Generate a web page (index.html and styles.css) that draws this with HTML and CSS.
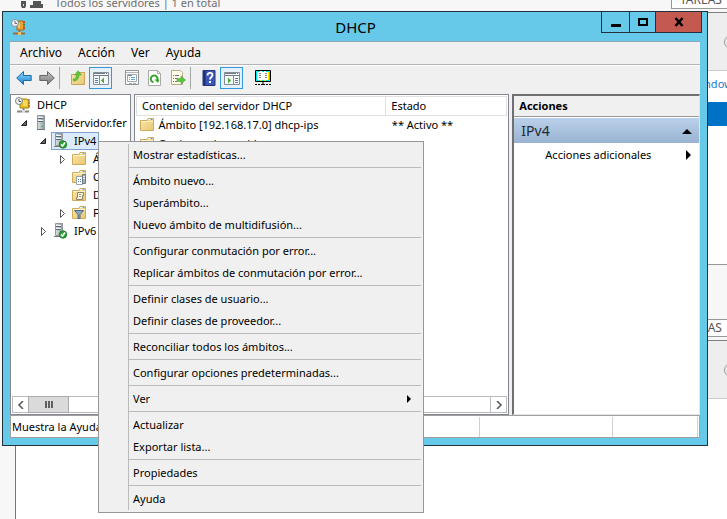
FILE: index.html
```html
<!DOCTYPE html>
<html lang="es">
<head>
<meta charset="utf-8">
<title>DHCP</title>
<link rel="stylesheet" href="styles.css">
</head>
<body>
<svg class="defs" aria-hidden="true">
  <defs>
    <linearGradient id="gold" x1="0" y1="0" x2="1" y2="1"><stop offset="0" stop-color="#fbe7a8"/><stop offset="1" stop-color="#e8c673"/></linearGradient>
    <linearGradient id="steel" x1="0" x2="1"><stop offset="0" stop-color="#dfe5e8"/><stop offset="1" stop-color="#8b979e"/></linearGradient>
    <linearGradient id="sky" x1="0" y1="0" x2="0" y2="1"><stop offset="0" stop-color="#8fd8fb"/><stop offset="1" stop-color="#1583cf"/></linearGradient>
    <linearGradient id="ash" x1="0" y1="0" x2="0" y2="1"><stop offset="0" stop-color="#c4c4c4"/><stop offset="1" stop-color="#777"/></linearGradient>
    <symbol id="folder" viewBox="0 0 16 16"><path d="M1.500 3.500h6.500l1-2h5.500v12h-13z" fill="url(#gold)" stroke="#cfab5e"/><path d="M9.500 2.500h4.500" stroke="#fff"/><path d="M11.500 2.500h2" stroke="#5b9bd5"/><path d="M2 4.500h12" stroke="#fff3c9"/></symbol>
    <symbol id="server" viewBox="0 0 16 16"><path d="M4.500.5h7v14h-7z" fill="url(#steel)" stroke="#8d989f"/><path d="M5 3.500h5M5 6.500h5" stroke="#5c6870"/><path d="M5 2.500h5M5 5.500h5" stroke="#f2f5f6"/><path d="M8 11.500h2" stroke="#55b53c"/><path d="M4 14.500h8" stroke="#6c777e"/></symbol>
    <symbol id="server-ok" viewBox="0 0 16 16"><path d="M3.500.5h7v12h-7z" fill="url(#steel)" stroke="#8d989f"/><path d="M4 3.500h5M4 6.500h5" stroke="#5c6870"/><path d="M4 2.500h5M4 5.500h5" stroke="#f2f5f6"/><path d="M2 13.500h6" stroke="#777"/><circle cx="11" cy="11.500" r="3.700" fill="#2fa336" stroke="#1e7e27"/><path d="M9 11.500l1.500 1.500 2.500-3.500" fill="none" stroke="#fff" stroke-width="1.500"/></symbol>
    <symbol id="dhcp" viewBox="0 0 16 16"><path d="M7 2h5l2 2v7H5V5z" fill="#e7c51e" stroke="#a78312"/><path d="M8 4h1v5M11 3v6" stroke="#fff49a" fill="none"/><path d="M13 3h2M13 6h2M13 9h2" stroke="#b2402b"/><path d="M8.500 11v2M2 14.500h12" stroke="#888" stroke-width="2"/><path d="M7 14.500h3" stroke="#ddd" stroke-width="3"/><circle cx="4" cy="4" r="3.500" fill="#f4f4f4" stroke="#808080"/><path d="M4 2v2.500h2" fill="none" stroke="#555"/></symbol>
    <symbol id="dhcp-title" viewBox="0 0 16 16"><path d="M7 2h5l1 2v7H6V5z" fill="#e9a233" stroke="#a86a19"/><path d="M8 4v5" stroke="#ffe09a"/><path d="M12 3h2M12 9h2" stroke="#b8572c" stroke-width="2"/><path d="M12 6h2" stroke="#3f8f46" stroke-width="2"/><path d="M8.500 11v2M2 14.500h12" stroke="#9b7040" stroke-width="2"/><path d="M7 14.500h3" stroke="#f4c160" stroke-width="3"/><circle cx="4" cy="4" r="3.500" fill="#eef2f4" stroke="#84929b"/><path d="M4 2v2.500h2" fill="none" stroke="#666"/></symbol>
    <symbol id="folder-server" viewBox="0 0 16 16"><use href="#folder"/><path d="M5.500 7.500h6v8h-6z" fill="#fff" stroke="#9aa3a8"/><path d="M7 10.500h1m1 0h1m-3 2h1m1 0h1" stroke="#4a74a8"/><path d="M11.500 5.500h3v9h-3z" fill="#a4b0b6" stroke="#6c7980"/><path d="M12 7.500h2m-2 2h2" stroke="#eee"/></symbol>
    <symbol id="folder-scroll" viewBox="0 0 16 16"><use href="#folder"/><path d="M6.500 5.500h6v3h-1v4h-6v-2h1z" fill="#f5f2e6" stroke="#95835a"/><path d="M8 7.500h2m-2 2h2" stroke="#a09880"/></symbol>
    <symbol id="folder-filter" viewBox="0 0 16 16"><use href="#folder"/><path d="M3.500 5.500h9l-3.500 4v4h-2v-4z" fill="#8fa9c2" stroke="#4c6982"/></symbol>
    <symbol id="open" viewBox="0 0 16 16"><path d="M10.500 5.500v5h-5z" fill="#666" stroke="#222"/></symbol>
    <symbol id="closed" viewBox="0 0 16 16"><path d="M6.500 4.500v8l4-4z" fill="#fff" stroke="#555"/></symbol>
    <symbol id="back" viewBox="0 0 16 16"><path d="M.7 8l6.800-6.500v4h7.700v5H7.500v4z" fill="url(#sky)" stroke="#1b6ca8"/></symbol>
    <symbol id="forward" viewBox="0 0 16 16"><path d="M15.300 8L8.500 1.500v4H.8v5h7.700v4z" fill="url(#ash)" stroke="#666"/></symbol>
    <symbol id="up" viewBox="0 0 16 16"><path d="M1.500 4.500h6l1-2h6v12h-13z" fill="url(#gold)" stroke="#c9a557"/><path d="M3 9c2.500 0 3.500-1.500 3.500-4H4.500L8 .7 11.500 5H9c0 4-2.500 6-5.500 6z" fill="#63c43c" stroke="#3c9f22" stroke-width=".5"/></symbol>
    <symbol id="pane-left" viewBox="0 0 16 16"><path d="M.5 2.500h15v12H.5z" fill="#f7f8f9" stroke="#858d96"/><path d="M1 3.500h11m1 0h1M1 5.500h14" stroke="#737d89"/><path d="M6.500 6v9" stroke="#858d96"/><path d="M2 8.500h3M2 10.500h3M2 12.500h3" stroke="#557fae"/><path d="M11 7.500v6l-3-3z" fill="#3fae35"/></symbol>
    <symbol id="pane-right" viewBox="0 0 16 16"><path d="M.5 2.500h15v12H.5z" fill="#f7f8f9" stroke="#858d96"/><path d="M1 3.500h11m1 0h1M1 5.500h14" stroke="#737d89"/><path d="M9.500 6v9" stroke="#858d96"/><path d="M11 8.500h3m-3 2h3m-3 2h3" stroke="#557fae"/><path d="M4 7.500v6l3-3z" fill="#3fae35"/></symbol>
    <symbol id="props" viewBox="0 0 16 16"><path d="M1.500.5h13v14h-13z" fill="#fafafa" stroke="#929292"/><path d="M2 2.500h12" stroke="#b4b4b4"/><path d="M3.500 4.500h9v7h-9z" fill="#fff" stroke="#9aa9b5"/><path d="M4 5.500h4" stroke="#74828e"/><path d="M5 7.500h1m1 0h4m-6 2h1m1 0h4" stroke="#66a5d5"/><path d="M5 13.500h3m1 0h3" stroke="#aaa"/></symbol>
    <symbol id="refresh" viewBox="0 0 16 16"><path d="M1.500.5h9l3 3v12h-12z" fill="#fff" stroke="#aaa"/><path d="M10.500.5v3h3" fill="none" stroke="#aaa"/><path d="M6.500 12.200a3.400 3.400 0 1 1 3.800-2" fill="none" stroke="#34a52b" stroke-width="2"/><path d="M7.500 9.500h5L11 13z" fill="#34a52b"/></symbol>
    <symbol id="export" viewBox="0 0 16 16"><path d="M1.500.5h9l2 2v12h-11z" fill="#fffbe8" stroke="#b5ab85"/><path d="M3 5.500h1m1 0h4M3 8.500h1m1 0h2m-4 3h1m1 0h2" stroke="#777"/><path d="M7 8.500h4V6l4.500 4-4.500 4v-2.500H7z" fill="#5ac63b" stroke="#36961f" stroke-width=".5"/></symbol>
    <symbol id="help" viewBox="0 0 16 16"><path d="M2 .5h12v15H2z" fill="#3c57b7" stroke="#26357c"/><path d="M3.500 1v14" stroke="#1d2c70" stroke-width="2"/><path d="M6.500 5.500c0-3.500 5-3.500 5-.5 0 2-2.500 2-2.500 4.500" fill="none" stroke="#fff" stroke-width="1.800"/><path d="M8 11h2v2H8z" fill="#fff"/></symbol>
    <symbol id="monitor" viewBox="0 0 16 16"><path d="M.5.5h15v11H.5z" fill="#fff" stroke="#000"/><path d="M1.500 1.500h13v9h-13z" fill="none" stroke="#00e5ee"/><path d="M5 1.500h2M9 1.500h2" stroke="#fff"/><path d="M2.500 2v8M13.500 2v8M5 10.500h2M9 10.500h2" stroke="#f5ee00"/><path d="M4 3.500h2M4 5.500h2M4 7.500h2M10 3.500h2M10 5.500h2M10 7.500h2" stroke="#888"/><path d="M8 12v3M6 14.500h4M0 14.500h2m1 0h2m6 0h2m1 0h2" stroke="#000"/></symbol>
  </defs>
</svg>

<div class="desktop">
  <header class="strip">
    <svg class="rack" viewBox="0 0 26 8" aria-hidden="true"><path d="M1 0h5v5l-1 2H2L1 5zM13 0h8v3h2v4H10V4h3z" fill="#555"/><path d="M3 3h1v2H3z" fill="#ddd"/></svg>
    <span class="strip-title">Todos los servidores | 1 en total</span>
    <button class="tasks" type="button">TAREAS</button>
  </header>
  <aside class="side"></aside>
  <main class="main">
    <div class="filter"><span class="circle"></span></div>
    <section class="grid-area"><a class="os" href="#">Windows Server</a><div class="picked"></div></section>
    <div class="heading"><button class="tasks" type="button">TAREAS</button></div>
    <div class="filter"><span class="circle"></span></div>
  </main>
</div>

<section class="window" aria-label="DHCP">
  <header class="titlebar">
    <svg class="icon" aria-hidden="true"><use href="#dhcp-title"/></svg>
    <h1>DHCP</h1>
    <div class="caption">
      <button type="button" aria-label="Minimizar"><svg viewBox="0 0 12 10"><path d="M1 8.500h10" stroke="#000" stroke-width="3"/></svg></button>
      <button class="max" type="button" aria-label="Maximizar"><svg viewBox="0 0 12 10"><path d="M2 2h8v6H2z" fill="none" stroke="#000" stroke-width="2"/></svg></button>
      <button class="close" type="button" aria-label="Cerrar"><svg viewBox="0 0 12 10"><path d="M2.500 1l7 8M9.500 1l-7 8" stroke="#000" stroke-width="2.500"/></svg></button>
    </div>
  </header>
  <div class="client">
    <nav class="menubar">
      <button type="button">Archivo</button><button type="button">Acción</button><button type="button">Ver</button><button type="button">Ayuda</button>
    </nav>
    <div class="toolbar">
      <button type="button" aria-label="Atrás"><svg class="icon"><use href="#back"/></svg></button>
      <button type="button" aria-label="Adelante"><svg class="icon"><use href="#forward"/></svg></button>
      <i class="rule"></i>
      <button type="button" aria-label="Subir un nivel"><svg class="icon"><use href="#up"/></svg></button>
      <button class="on" type="button" aria-label="Mostrar árbol"><svg class="icon"><use href="#pane-left"/></svg></button>
      <i class="rule blank"></i>
      <button type="button" aria-label="Propiedades"><svg class="icon"><use href="#props"/></svg></button>
      <button type="button" aria-label="Actualizar"><svg class="icon"><use href="#refresh"/></svg></button>
      <button type="button" aria-label="Exportar lista"><svg class="icon"><use href="#export"/></svg></button>
      <i class="rule"></i>
      <button type="button" aria-label="Ayuda"><svg class="icon"><use href="#help"/></svg></button>
      <button class="on" type="button" aria-label="Mostrar acciones"><svg class="icon"><use href="#pane-right"/></svg></button>
      <i class="rule blank"></i>
      <button type="button" aria-label="Agregar servidor"><svg class="icon"><use href="#monitor"/></svg></button>
    </div>
    <div class="panes">
      <div class="pane">
        <ul class="tree">
          <li class="root"><span class="node"><svg class="icon"><use href="#dhcp"/></svg>DHCP</span></li>
          <li class="l1"><svg class="icon"><use href="#open"/></svg><span class="node"><svg class="icon"><use href="#server"/></svg>MiServidor.fer</span></li>
          <li class="l2"><svg class="icon"><use href="#open"/></svg><span class="node selected"><svg class="icon"><use href="#server-ok"/></svg>IPv4</span></li>
          <li class="l3"><svg class="icon"><use href="#closed"/></svg><span class="node"><svg class="icon"><use href="#folder"/></svg>Á</span></li>
          <li class="l3"><svg class="icon"></svg><span class="node"><svg class="icon"><use href="#folder-server"/></svg>O</span></li>
          <li class="l3"><svg class="icon"></svg><span class="node"><svg class="icon"><use href="#folder-scroll"/></svg>D</span></li>
          <li class="l3"><svg class="icon"><use href="#closed"/></svg><span class="node"><svg class="icon"><use href="#folder-filter"/></svg>F</span></li>
          <li class="l2"><svg class="icon"><use href="#closed"/></svg><span class="node"><svg class="icon"><use href="#server-ok"/></svg>IPv6</span></li>
        </ul>
        <div class="scroll">
          <button type="button" aria-label="Desplazar a la izquierda"><svg viewBox="0 0 8 8"><path d="M6 0L2 4l4 4" fill="none" stroke="#555" stroke-width="1.500"/></svg></button>
          <span class="thumb"><i></i><i></i><i></i></span>
        </div>
      </div>
      <div class="pane">
        <table class="list">
          <thead><tr><th>Contenido del servidor DHCP</th><th class="state">Estado</th></tr></thead>
          <tbody>
            <tr><td><span class="cell"><svg class="icon"><use href="#folder"/></svg>Ámbito [192.168.17.0] dhcp-ips</span></td><td>** Activo **</td></tr>
            <tr><td><span class="cell"><svg class="icon"><use href="#folder"/></svg>Opciones de servidor</span></td><td></td></tr>
          </tbody>
        </table>
        <div class="scroll end">
          <button type="button" aria-label="Desplazar a la derecha"><svg viewBox="0 0 8 8"><path d="M2 0l4 4-4 4" fill="none" stroke="#555" stroke-width="1.500"/></svg></button>
        </div>
      </div>
      <aside class="actions">
        <h2>Acciones</h2>
        <button class="group" type="button">IPv4<svg viewBox="0 0 10 10"><path d="M0 8h10L5 3z"/></svg></button>
        <button class="more" type="button">Acciones adicionales<svg viewBox="0 0 10 10"><path d="M3 0v10l5-5z"/></svg></button>
      </aside>
    </div>
    <footer class="status"><span>Muestra la Ayuda</span><span></span><span></span></footer>
  </div>
</section>

<div class="context" role="menu">
  <div class="items"><button type="button" role="menuitem">Mostrar estadísticas...</button></div>
  <div class="items"><button type="button" role="menuitem">Ámbito nuevo...</button><button type="button" role="menuitem">Superámbito...</button><button type="button" role="menuitem">Nuevo ámbito de multidifusión...</button></div>
  <div class="items"><button type="button" role="menuitem">Configurar conmutación por error...</button><button type="button" role="menuitem">Replicar ámbitos de conmutación por error...</button></div>
  <div class="items"><button type="button" role="menuitem">Definir clases de usuario...</button><button type="button" role="menuitem">Definir clases de proveedor...</button></div>
  <div class="items"><button type="button" role="menuitem">Reconciliar todos los ámbitos...</button></div>
  <div class="items"><button type="button" role="menuitem">Configurar opciones predeterminadas...</button></div>
  <div class="items"><button type="button" role="menuitem">Ver<svg viewBox="0 0 8 8"><path d="M2 0v8l4-4z"/></svg></button></div>
  <div class="items"><button type="button" role="menuitem">Actualizar</button><button type="button" role="menuitem">Exportar lista...</button></div>
  <div class="items"><button type="button" role="menuitem">Propiedades</button></div>
  <div class="items"><button type="button" role="menuitem">Ayuda</button></div>
</div>
</body>
</html>
```

FILE: styles.css
```css
* { box-sizing: border-box; }
html, body { height: 100%; }
body {
  margin: 0;
  position: relative;
  overflow: hidden;
  background: #fff;
  color: #000;
  font: 11px/18px "Noto Sans", "Open Sans", sans-serif;
}
button {
  margin: 0;
  padding: 0;
  border: 0;
  background: none;
  color: inherit;
  font: inherit;
}
.defs { position: absolute; width: 0; height: 0; }
.icon { width: 16px; height: 16px; flex: none; display: block; }

/* Server manager behind the console */
.desktop {
  height: 100%;
  display: grid;
  grid-template: 12px 1fr / 16px 1fr;
  overflow: hidden;
}
.strip {
  grid-column: 1 / -1;
  display: flex;
  align-items: flex-end;
  justify-content: flex-start;
  padding-bottom: 3px;
  background: #f7f7f7;
  overflow: hidden;
}
.rack { width: 26px; height: 8px; margin: 0 9px 0 20px; }
.strip-title { margin-right: auto; color: #6e6e6e; line-height: 12px; }
.tasks {
  width: 80px;
  height: 18px;
  flex: none;
  margin-right: -24px;
  padding-left: 8px;
  border: 1px solid #999;
  background: #fff;
  color: #555;
  font-size: 12px;
  line-height: 16px;
  text-align: left;
}
.side { background: #f7f7f7; border-right: 1px solid #777; }
.main { display: flex; flex-direction: column; overflow: hidden; }
.filter {
  height: 59px;
  flex: none;
  display: flex;
  justify-content: flex-end;
  align-items: center;
  border-top: 1px solid #808080;
  border-bottom: 1px solid #ccc;
  background: #eee;
}
.circle {
  width: 14px;
  height: 14px;
  margin-right: -11px;
  border: 1px solid #999;
  border-radius: 50%;
}
.grid-area { height: 193px; flex: none; padding-top: 4px; }
.os {
  display: block;
  width: 36px;
  height: 27px;
  margin-left: auto;
  color: #1979ca;
  white-space: nowrap;
  text-decoration: none;
}
.picked { height: 24px; background: #0072c6; }
.heading {
  height: 76px;
  flex: none;
  display: flex;
  justify-content: flex-end;
  align-items: flex-end;
  padding-bottom: 3px;
  border-top: 1px solid #999;
  background: #f7f7f7;
}

/* Console window */
.window {
  position: absolute;
  inset: 11px 19px 73px 2px;
  display: flex;
  flex-direction: column;
  padding: 0 7px 7px;
  border: 1px solid #20303a;
  background: #66c9ea;
}
.titlebar {
  height: 29px;
  flex: none;
  display: grid;
  grid-template-columns: 1fr auto 1fr;
  align-items: center;
  padding-left: 1px;
}
.titlebar h1 { margin: 0; font-size: 15px; font-weight: 400; line-height: 20px; }
.caption { display: flex; justify-content: flex-end; align-self: start; margin-right: -2px; }
.caption button {
  width: 28px;
  height: 21px;
  display: grid;
  place-items: center;
  border: solid #20303a;
  border-width: 0 0 1px 1px;
}
.caption svg { width: 12px; height: 10px; }
.caption .max { width: 26px; }
.caption .close { width: 47px; border-right-width: 1px; background: #c3594f; }
.client {
  flex: 1;
  min-height: 0;
  display: flex;
  flex-direction: column;
  border-top: 1px solid #8fa9b3;
  background: #f0f0f0;
}
.menubar {
  display: flex;
  gap: 16px;
  height: 23px;
  flex: none;
  padding-left: 10px;
  border-bottom: 1px solid #b4b4b4;
  font-size: 12px;
}
.toolbar {
  display: flex;
  align-items: flex-start;
  height: 29px;
  flex: none;
  padding: 1px 2px;
  border-top: 1px solid #fff;
}
.toolbar button { width: 23px; height: 22px; display: grid; place-items: center; }
.toolbar .on { border: 1px solid #3399dd; background: #e4f1fb; }
.rule { width: 1px; height: 22px; margin: 0 6px 0 1px; background: #a8a8a8; }
.rule.blank { background: none; }
.panes {
  flex: 1;
  min-height: 0;
  display: grid;
  grid-template-columns: 121px 2fr 1fr;
  column-gap: 3px;
}
.pane {
  min-width: 0;
  display: flex;
  flex-direction: column;
  justify-content: space-between;
  padding: 1px;
  border: 1px solid #828790;
  background: #fff;
  overflow: hidden;
}
.tree { margin: 0; padding: 0; list-style: none; white-space: nowrap; }
.tree li { display: flex; align-items: center; height: 18px; }
.node { display: flex; align-items: center; gap: 6px; height: 18px; padding-right: 2px; border: 1px solid transparent; }
.selected { border-color: #7da2ce; background: #dcebfc; }
.root { padding-left: 2px; }
.l1 { padding-left: 4px; }
.l2 { padding-left: 23px; }
.l3 { padding-left: 42px; }
.scroll { display: flex; height: 17px; flex: none; border: 1px solid #bbb; }
.scroll.end { justify-content: flex-end; }
.scroll button { width: 16px; display: grid; place-items: center; }
.scroll.end button { border-left: 1px solid #bbb; }
.scroll svg { width: 8px; height: 8px; }
.thumb {
  width: 39px;
  display: flex;
  justify-content: center;
  align-items: center;
  gap: 1px;
  outline: 1px solid #aaa;
  background: #dadada;
}
.thumb i { width: 2px; height: 7px; background: #606060; }
.list { width: 100%; border-collapse: collapse; table-layout: fixed; }
.list th {
  height: 19px;
  padding: 0 0 0 5px;
  border: 1px solid #e0e0e0;
  font-weight: 400;
  text-align: left;
}
.list .state { width: 121px; }
.list td { height: 19px; padding: 0 0 0 6px; }
.list td:first-child { padding-left: 2px; }
.cell { display: flex; align-items: center; gap: 4px; }
.actions {
  border: solid;
  border-width: 2px 1px 1px 2px;
  border-color: #707070 #e3e3e3 #e3e3e3 #707070;
  background: #fff;
}
.actions h2 {
  height: 21px;
  margin: 0 0 1px;
  padding-left: 5px;
  border-bottom: 1px solid #999;
  background: #f0f0f0;
  font-size: 11px;
  line-height: 20px;
}
.actions button { width: 100%; display: flex; align-items: center; justify-content: space-between; }
.actions svg { width: 10px; height: 10px; }
.actions .group {
  height: 25px;
  padding: 0 7px;
  background: linear-gradient(#bad1ea, #98b2d1);
  font-size: 14px;
  color: #1f2a36;
}
.actions .more { height: 24px; padding: 0 6px 0 31px; }
.status {
  height: 23px;
  flex: none;
  display: grid;
  grid-template-columns: 468px 133px 1fr;
  padding: 1px;
  border: 1px solid #a0a0a0;
  background: #fff;
  line-height: 20px;
}
.status span { border-right: 1px solid #d0d0d0; }

/* Context menu */
.context {
  position: absolute;
  top: 141px;
  left: 98px;
  width: 326px;
  padding: 2px;
  border: 1px solid #979797;
  background: linear-gradient(#bbb, #bbb) 29px 2px / 1px calc(100% - 4px) no-repeat #f0f0f0;
}
.items + .items { padding-top: 4px; background: linear-gradient(#bbb, #bbb) 28px 1px / 100% 1px no-repeat; }
.items button {
  width: 100%;
  height: 22px;
  display: flex;
  align-items: center;
  justify-content: space-between;
  padding: 0 8px 0 32px;
  white-space: nowrap;
}
.items svg { width: 8px; height: 8px; }
```
